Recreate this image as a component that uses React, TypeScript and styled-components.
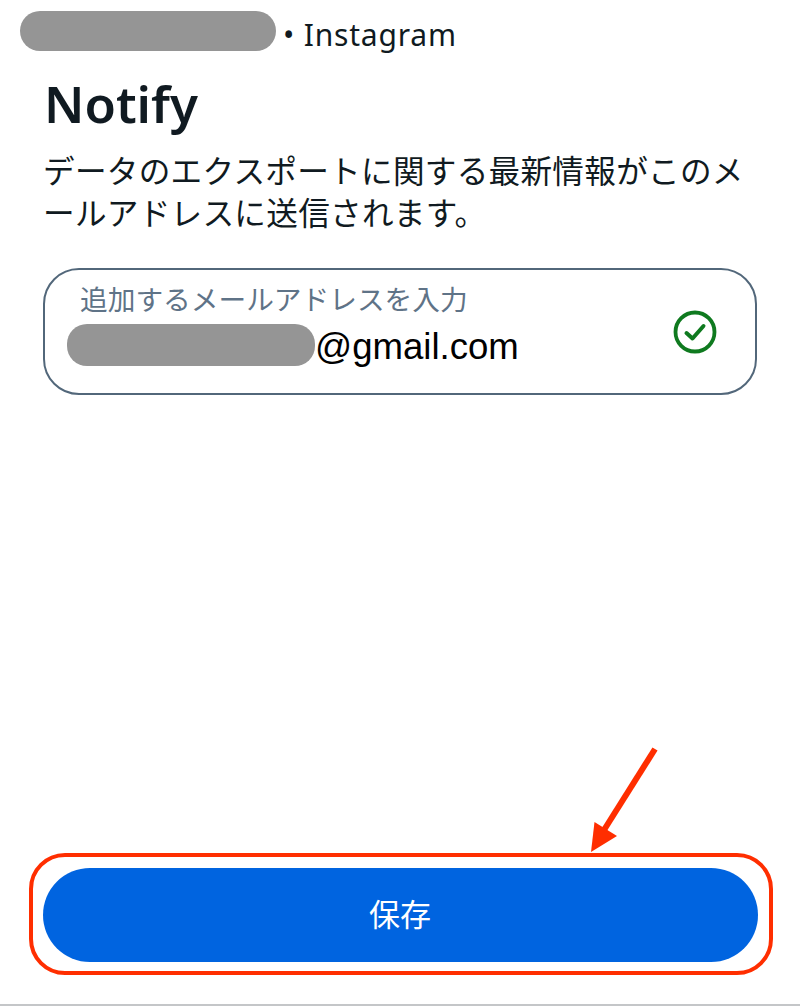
import React from "react";
import styled, { createGlobalStyle } from "styled-components";

const FONT = `"Noto Sans", "Noto Sans CJK JP", sans-serif`;

const Global = createGlobalStyle`
  html, body { margin: 0; padding: 0; background: #fff; }
  * { box-sizing: border-box; }
`;

const Page = styled.main`
  position: relative;
  width: 800px;
  height: 1006px;
  display: flex;
  flex-direction: column;
  background: #fff;
  font-family: ${FONT};
  color: #101a21;
  border-bottom: 2px solid #c4c6c8;
  overflow: hidden;
`;

const Account = styled.div`
  display: flex;
  align-items: center;
  gap: 7px;
  height: 40px;
  margin: 11px 0 0 20px;
  font-size: 30px;
  line-height: 40px;
  letter-spacing: 0.8px;
`;

const AccountName = styled.span`
  padding-top: 8px;
`;

const Redaction = styled.div<{ $w: number; $h: number }>`
  width: ${(p) => p.$w}px;
  height: ${(p) => p.$h}px;
  flex: none;
  background: #959595;
  border-radius: 20px;
`;

const Title = styled.h1`
  margin: 21px 0 0 44px;
  font-size: 51px;
  line-height: 62px;
  font-weight: 600;
  color: #101a21;
`;

const Description = styled.p`
  margin: 16px 0 0 43px;
  width: 716px;
  font-size: 31.6px;
  line-height: 42px;
  letter-spacing: 0.3px;
  font-weight: 400;
  color: #101a21;
`;

const Field = styled.div`
  margin: 34px 43px 0;
  height: 127px;
  display: flex;
  align-items: center;
  justify-content: space-between;
  padding: 11px 38px 0 22px;
  border: 2px solid #52677a;
  border-radius: 36px;
`;

const FieldBody = styled.div`
  display: flex;
  flex-direction: column;
  align-self: flex-start;
`;

const FieldLabel = styled.div`
  margin-left: 13px;
  font-size: 27.7px;
  line-height: 36px;
  color: #5f7387;
`;

const FieldValue = styled.div`
  display: flex;
  align-items: center;
  margin-top: 5px;
  font-family: "Liberation Sans", sans-serif;
  font-size: 36.6px;
  line-height: 42px;
  color: #000;
`;

const ValueText = styled.span`
  margin-top: 4px;
`;

const CheckIcon = styled.svg`
  width: 44px;
  height: 44px;
  margin-bottom: 11px;
  flex: none;
`;

const Footer = styled.div`
  margin: auto 27px 29px 29px;
`;

const Highlight = styled.div`
  height: 122px;
  padding: 10.5px 11.5px 10.5px 9.5px;
  border: 4.5px solid #ff2e00;
  border-radius: 36px;
`;

const SaveButton = styled.button`
  display: block;
  width: 100%;
  height: 94px;
  padding: 0 0 4px;
  border: 0;
  border-radius: 47px;
  background: #0064e0;
  color: #fff;
  font-family: ${FONT};
  font-size: 31px;
  font-weight: 400;
`;

const Arrow = styled.svg`
  position: absolute;
  left: 580px;
  top: 740px;
  width: 90px;
  height: 120px;
`;

export default function App() {
  return (
    <Page>
      <Global />
      <Account>
        <Redaction $w={256} $h={40} />
        <AccountName>• Instagram</AccountName>
      </Account>
      <Title>Notify</Title>
      <Description>データのエクスポートに関する最新情報がこのメールアドレスに送信されます。</Description>
      <Field>
        <FieldBody>
          <FieldLabel>追加するメールアドレスを入力</FieldLabel>
          <FieldValue>
            <Redaction $w={248} $h={42} />
            <ValueText>@gmail.com</ValueText>
          </FieldValue>
        </FieldBody>
        <CheckIcon viewBox="0 0 44 44" fill="none" stroke="#0f7a1f" strokeLinecap="round" strokeLinejoin="round">
          <circle cx="22" cy="22" r="19.5" strokeWidth="3.8" />
          <path d="M13.5 23 L19.5 28.5 L30.5 16" strokeWidth="4" />
        </CheckIcon>
      </Field>
      <Footer>
        <Highlight>
          <SaveButton>保存</SaveButton>
        </Highlight>
      </Footer>
      <Arrow viewBox="0 0 90 120">
        <path d="M75 9 L24 90" stroke="#ff2e00" strokeWidth="6" strokeLinecap="butt" fill="none" />
        <path d="M11 112 L14.5 82 L37 96 Z" fill="#ff2e00" />
      </Arrow>
    </Page>
  );
}
